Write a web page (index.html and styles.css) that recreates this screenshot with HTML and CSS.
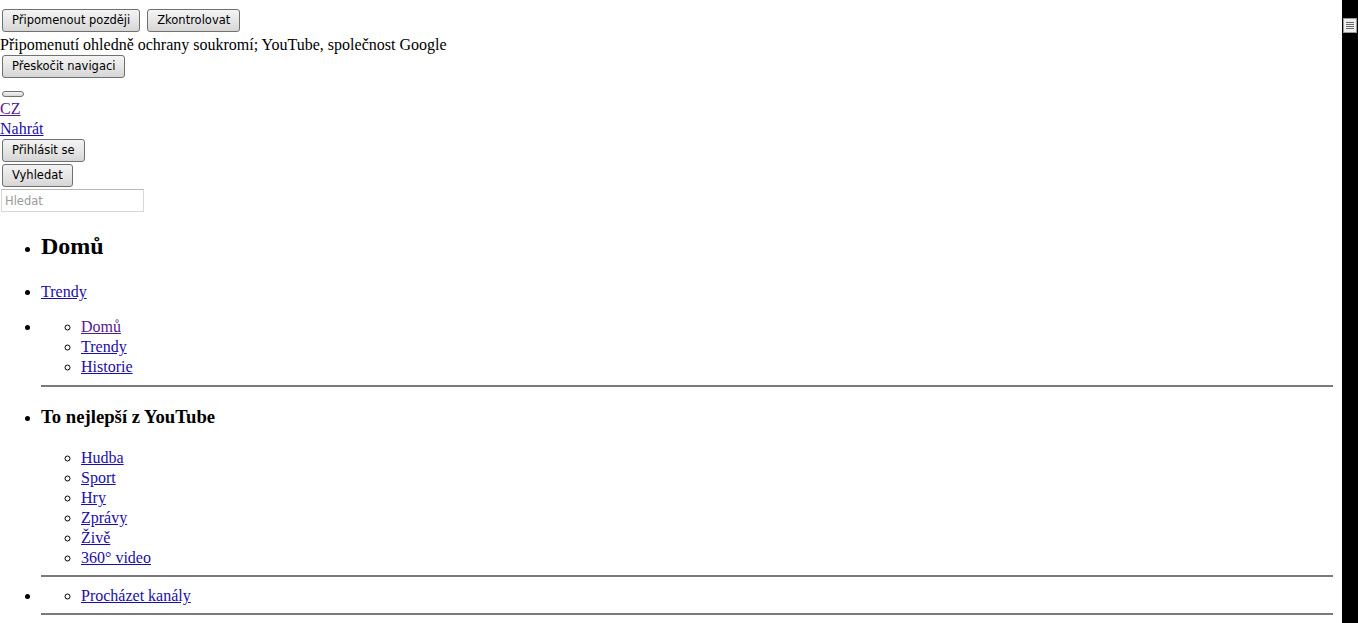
FILE: index.html
```
<!DOCTYPE html>
<html lang="cs">
<head>
  <meta charset="UTF-8" />
  <title>YouTube</title>
  <link rel="stylesheet" href="styles.css">
</head>
<body>
  <div class="page">
    <div class="consent">
      <button class="btn">Připomenout později</button>
      <button class="btn">Zkontrolovat</button>
    </div>
    <div class="line">Připomenutí ohledně ochrany soukromí; YouTube, společnost Google</div>
    <div class="row"><button class="btn">Přeskočit navigaci</button></div>

    <div class="row guide-toggle"><button class="btn btn-empty"></button></div>
    <div class="line"><a href="#" class="visited">CZ</a></div>
    <div class="line"><a href="#">Nahrát</a></div>
    <div class="row"><button class="btn">Přihlásit se</button></div>
    <div class="row"><button class="btn">Vyhledat</button></div>
    <div class="row"><input class="search" type="text" placeholder="Hledat"></div>

    <ul class="guide">
      <li class="guide-home"><h2>Domů</h2></li>
      <li class="guide-trend"><a href="#">Trendy</a></li>
      <li class="guide-section first">
        <ul class="sub">
          <li><a href="#" class="visited">Domů</a></li>
          <li><a href="#">Trendy</a></li>
          <li><a href="#">Historie</a></li>
        </ul>
        <hr>
      </li>
      <li class="guide-section best">
        <h3>To nejlepší z YouTube</h3>
        <ul class="sub">
          <li><a href="#">Hudba</a></li>
          <li><a href="#">Sport</a></li>
          <li><a href="#">Hry</a></li>
          <li><a href="#">Zprávy</a></li>
          <li><a href="#">Živě</a></li>
          <li><a href="#">360° video</a></li>
        </ul>
        <hr>
      </li>
      <li class="guide-section last">
        <ul class="sub">
          <li><a href="#">Procházet kanály</a></li>
        </ul>
        <hr>
      </li>
    </ul>
  </div>

  <div class="scrollbar">
    <svg class="thumb" width="14" height="15" viewBox="0 0 14 15">
      <rect x="0.5" y="0.5" width="13" height="14" fill="#ececec" stroke="#9a9a9a"/>
      <line x1="3" y1="4.5" x2="11" y2="4.5" stroke="#6a6a6a"/>
      <line x1="3" y1="6.5" x2="11" y2="6.5" stroke="#6a6a6a"/>
      <line x1="3" y1="8.5" x2="11" y2="8.5" stroke="#6a6a6a"/>
      <line x1="3" y1="10.5" x2="11" y2="10.5" stroke="#6a6a6a"/>
    </svg>
  </div>
</body>
</html>
```

FILE: styles.css
```
html, body {
  margin: 0;
  height: 100vh;
  overflow: hidden;
}
body {
  display: flex;
  background: #fff;
  color: #000;
  font-family: "Liberation Serif", "Times New Roman", serif;
  font-size: 16px;
  line-height: 20px;
}
.page {
  flex: 1;
  min-width: 0;
}
a {
  color: #1a0dab;
}
a.visited {
  color: #551a8b;
}

/* native-looking buttons */
.btn {
  display: inline-block;
  height: 23px;
  margin: 0 2px;
  padding: 0 9px;
  border: 1px solid #707070;
  border-radius: 3px;
  background: linear-gradient(#f4f4f4, #e6e6e6 50%, #d6d6d6);
  color: #000;
  font-family: "DejaVu Sans", Verdana, sans-serif;
  font-size: 11.5px;
  line-height: 21px;
  vertical-align: top;
}
.btn-empty {
  width: 22px;
  height: 6px;
  padding: 0;
}
.consent {
  display: flex;
  gap: 5px;
  padding-top: 9px;
  height: 24px;
}
.consent .btn {
  margin-right: 0;
}
.row {
  height: 24px;
  margin-top: 1px;
}
.line {
  height: 20px;
}
.consent + .line {
  margin-top: 0;
  padding-top: 2px;
}
.guide-toggle {
  height: 7px;
  margin-top: 12px;
  padding-bottom: 1px;
}
.line + .row {
  margin-top: 0;
}
.search {
  box-sizing: border-box;
  width: 143px;
  height: 23px;
  margin: 0 0 0 1px;
  padding: 2px 3px;
  border: 1px solid #d8d8d8;
  border-top-color: #b8b8b8;
  font-family: "DejaVu Sans", Verdana, sans-serif;
  font-size: 11.5px;
}
.search::placeholder {
  color: #9a9a9a;
}

/* left guide */
.guide {
  margin: 19px 0 0;
  padding-left: 41px;
  list-style: disc;
}
.guide h2 {
  margin: 0;
  font-size: 24px;
  line-height: 28px;
}
.guide-trend {
  margin-top: 22px;
}
.guide-section.first {
  margin-top: 15px;
}
.guide h3 {
  margin: 0;
  font-size: 18.72px;
  line-height: 22px;
}
.guide-section.best {
  margin-top: 19px;
}
.guide-section.best .sub {
  margin-top: 20px;
}
.guide-section.last {
  margin-top: 9px;
}
.sub {
  margin: 0;
  padding-left: 40px;
  list-style: circle;
}
.guide hr {
  height: 0;
  margin: 8px 9px 0 0;
  border: 0;
  border-top: 2px solid #7a7a7a;
}
.guide-section.best hr {
  margin-top: 7px;
}
.guide-section.last hr {
  margin-top: 7px;
}

/* window scrollbar strip */
.scrollbar {
  flex: 0 0 16px;
  background: #000;
  padding-top: 18px;
  box-sizing: border-box;
}
.thumb {
  display: block;
  margin-left: 1px;
}
```
